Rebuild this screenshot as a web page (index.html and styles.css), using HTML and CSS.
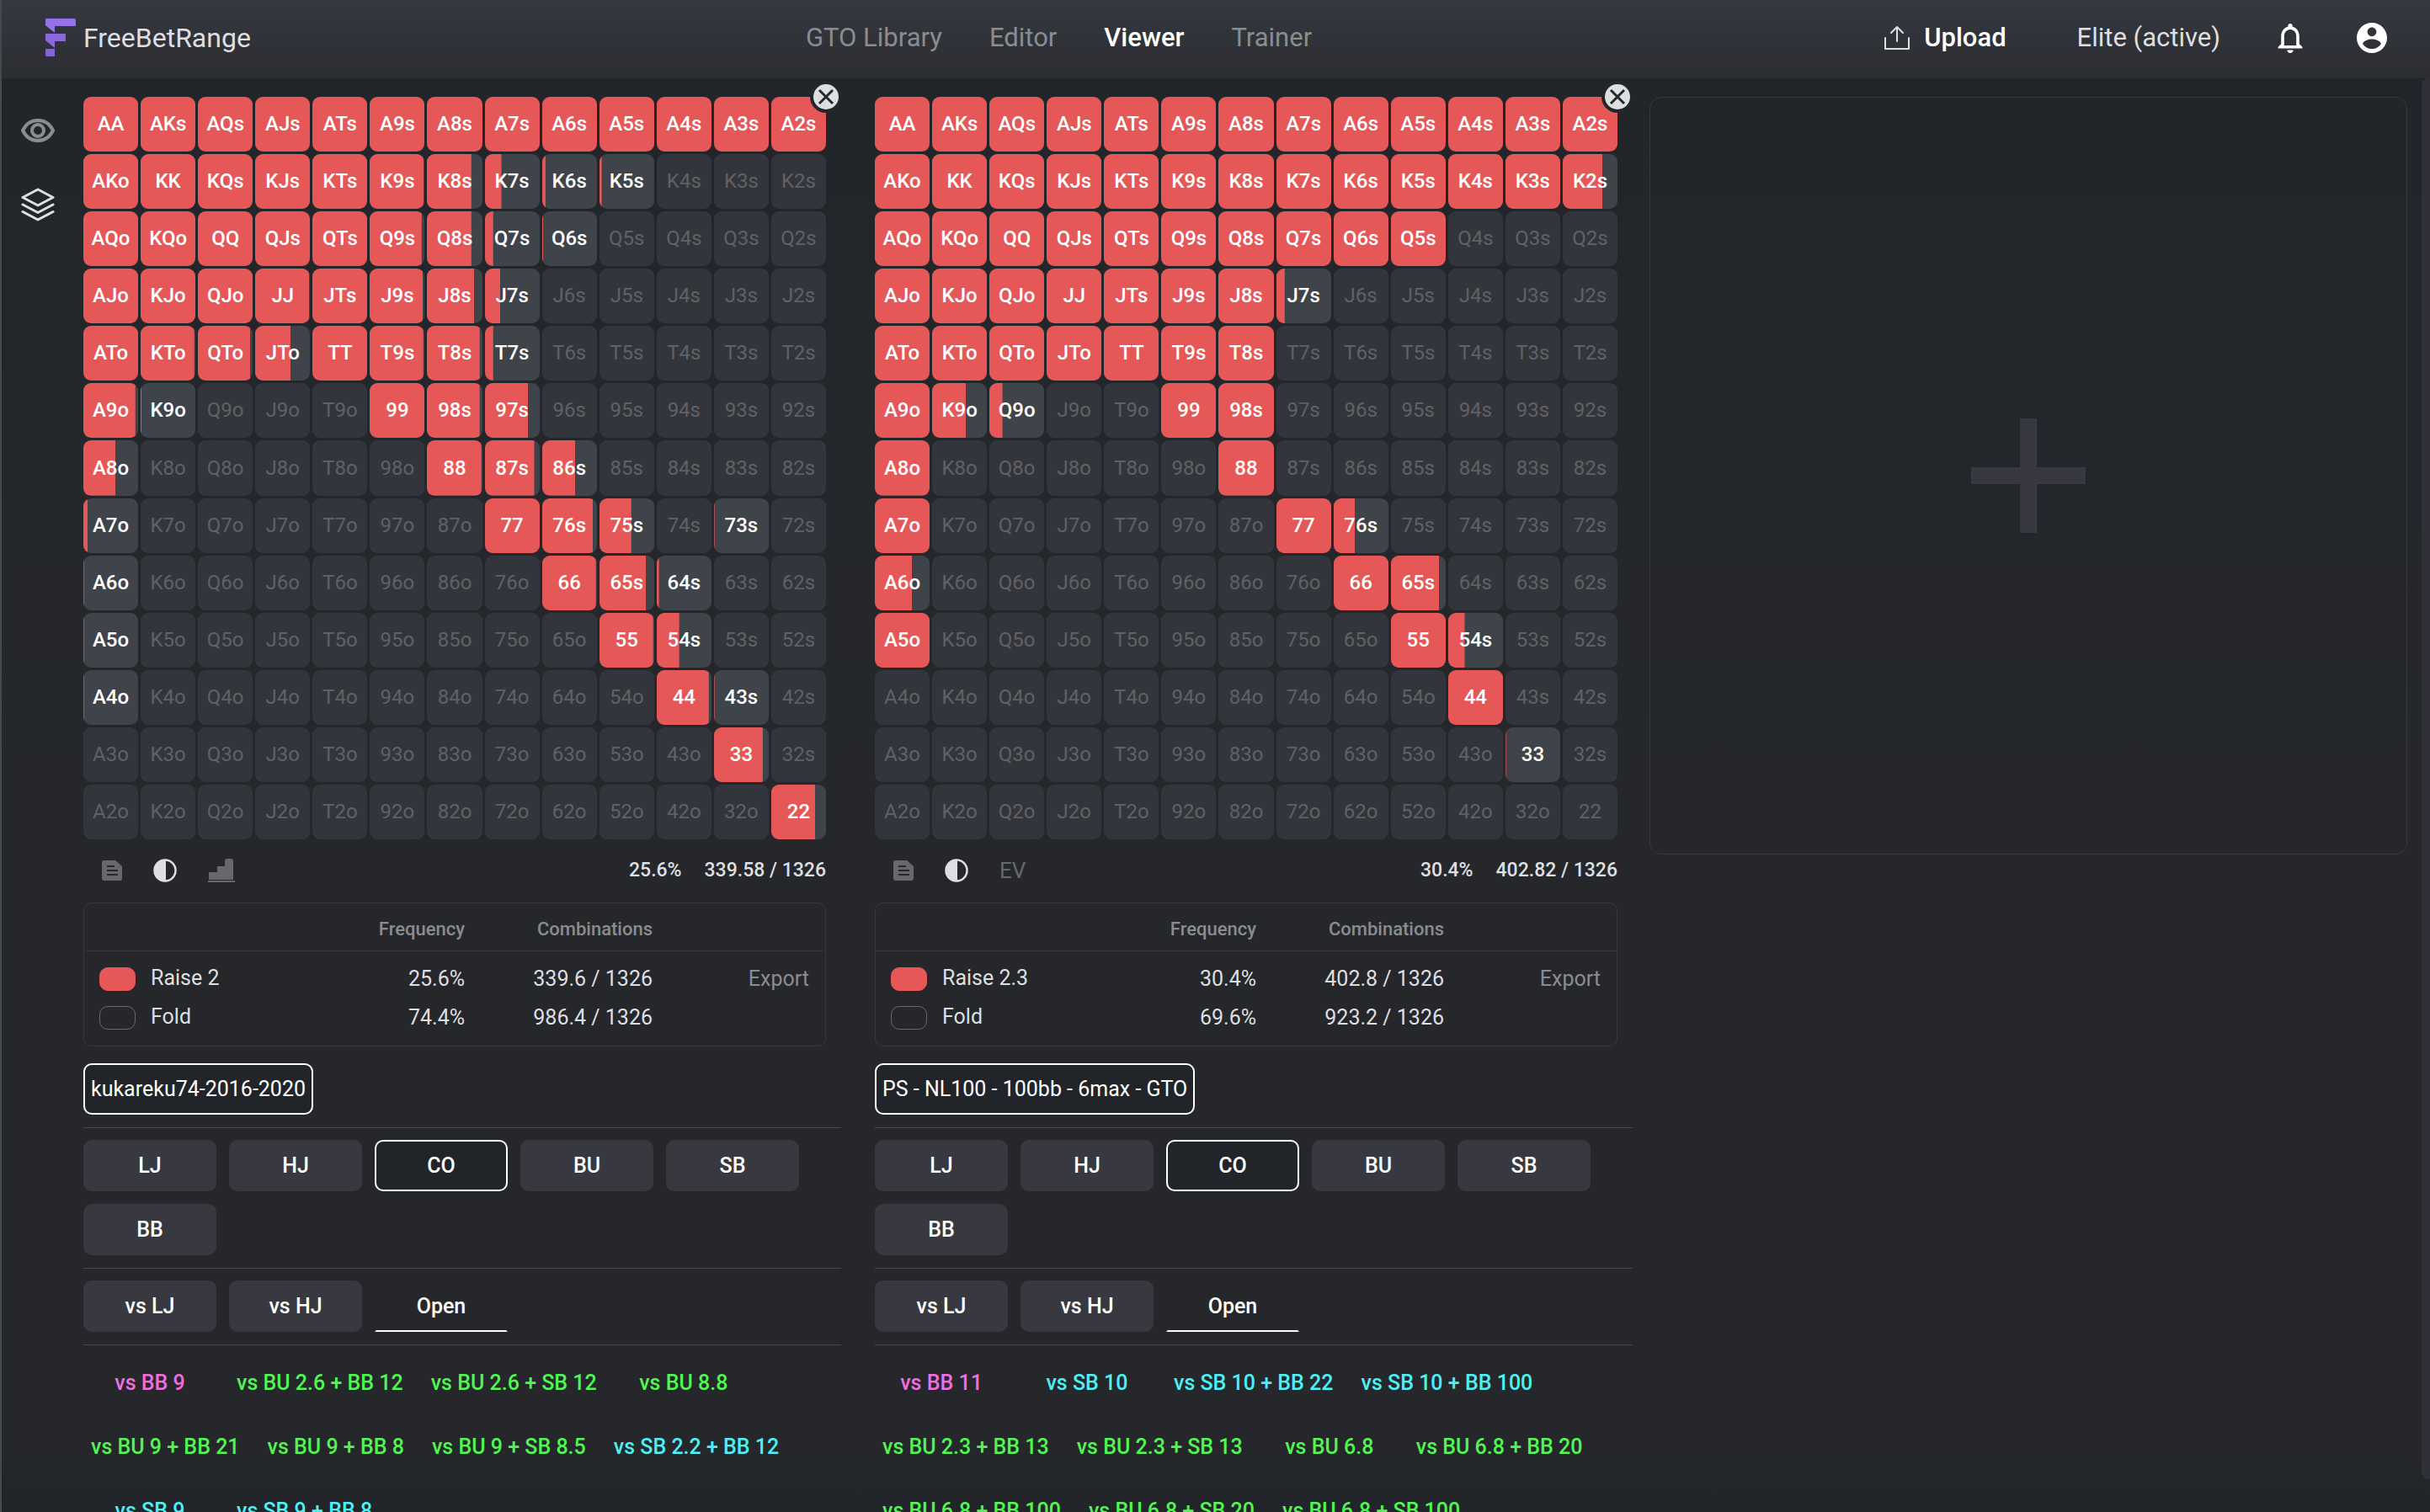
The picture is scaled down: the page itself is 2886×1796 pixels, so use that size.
FILE: index.html
```html
<!DOCTYPE html>
<html lang="en">
<head>
<meta charset="utf-8">
<title>FreeBetRange - Viewer</title>
<link rel="stylesheet" href="styles.css">
</head>
<body>
<header class="topbar">
  <a class="brand" href="#">
    <svg class="brand-mark" viewBox="0 0 36 45" width="36" height="45" aria-hidden="true">
      <path fill="#9572e8" d="M1 0h33a2 2 0 0 1 2 2v6a1 1 0 0 1-1 1H11v8L0 8V1a1 1 0 0 1 1-1z"/>
      <path fill="#8b68dc" d="M0 18h24v9H11v8L0 26z"/>
      <path fill="#8463d2" d="M0 36h11v9H1a1 1 0 0 1-1-1z"/>
    </svg>
    <span>FreeBetRange</span>
  </a>
  <nav class="nav">
    <a href="#">GTO Library</a>
    <a href="#">Editor</a>
    <a class="current" href="#" aria-current="page">Viewer</a>
    <a href="#">Trainer</a>
  </nav>
  <div class="account">
    <button class="upload" type="button">
      <svg viewBox="0 0 30 30" width="30" height="30" fill="none" stroke="currentColor" stroke-width="2" stroke-linejoin="round" stroke-linecap="round" aria-hidden="true"><path d="M15 19V2M8 9l7-7 7 7M1 15v13h28V15"/></svg>
      <span>Upload</span>
    </button>
    <a class="plan" href="#">Elite (active)</a>
    <button class="icon-button" type="button" aria-label="Notifications">
      <svg viewBox="4 2 16 20" width="30" height="36" fill="currentColor" aria-hidden="true"><path d="M12 22c1.100 0 2-.9 2-2h-4c0 1.100.9 2 2 2zm6-6v-5c0-3.070-1.630-5.640-4.500-6.320V4c0-.83-.67-1.500-1.500-1.500s-1.500.67-1.500 1.500v.68C7.640 5.360 6 7.920 6 11v5l-2 2v1h16v-1l-2-2zm-2 1H8v-6c0-2.480 1.510-4.500 4-4.500s4 2.020 4 4.500v6z"/></svg>
    </button>
    <button class="icon-button" type="button" aria-label="Account">
      <svg viewBox="2 2 20 20" width="36" height="36" fill="currentColor" aria-hidden="true"><path d="M12 2C6.480 2 2 6.480 2 12s4.480 10 10 10 10-4.480 10-10S17.520 2 12 2zm0 3c1.660 0 3 1.340 3 3s-1.340 3-3 3-3-1.340-3-3 1.340-3 3-3zm0 14.200c-2.500 0-4.710-1.280-6-3.220.03-1.990 4-3.080 6-3.080 1.990 0 5.970 1.090 6 3.080-1.290 1.940-3.500 3.220-6 3.220z"/></svg>
    </button>
  </div>
</header>

<div class="workspace">
  <aside class="rail">
    <button class="icon-button muted" type="button" aria-label="Visibility">
      <svg viewBox="0 0 40 30" width="40" height="30" fill="none" stroke="currentColor" stroke-width="4" stroke-linejoin="round" aria-hidden="true"><path d="M2 15C6 7 12 3 20 3s14 4 18 12c-4 8-10 12-18 12S6 23 2 15z"/><circle cx="20" cy="15" r="7"/></svg>
    </button>
    <button class="icon-button" type="button" aria-label="Layers">
      <svg viewBox="0 0 40 40" width="40" height="40" fill="none" stroke="currentColor" stroke-width="3" stroke-linejoin="round" stroke-linecap="round" aria-hidden="true"><path d="M20 2l18 9.500L20 21 2 11.500zM2 20l18 9.500L38 20M2 28.500L20 38l18-9.500"/></svg>
    </button>
  </aside>

  <main class="panels">
    <section class="panel" aria-label="kukareku74-2016-2020">
      <div class="range">
        <div class="matrix" data-range="left"></div>
        <button class="close" type="button" aria-label="Close range"><svg viewBox="0 0 30 30" width="30" height="30" fill="none" stroke="#24272b" stroke-width="3" aria-hidden="true"><path d="M7 7l16 16M23 7L7 23"/></svg></button>
        <div class="toolbar">
          <button class="tool" type="button" aria-label="Notes"><svg viewBox="0 0 24 24" width="24" height="24" aria-hidden="true"><path fill="currentColor" d="M3 0h13l8 7v14a3 3 0 0 1-3 3H3a3 3 0 0 1-3-3V3a3 3 0 0 1 3-3z"/><path stroke="#25272b" stroke-width="2" d="M6 7h9M6 12h13M6 17h13"/></svg></button>
          <button class="tool on" type="button" aria-label="Contrast"><svg viewBox="0 0 28 28" width="28" height="28" aria-hidden="true"><circle cx="14" cy="14" r="12.500" fill="none" stroke="currentColor" stroke-width="2.500"/><path fill="currentColor" d="M15 1v26A13 13 0 0 1 15 1z"/></svg></button>
          <button class="tool" type="button" aria-label="Chart"><svg viewBox="0 0 32 28" width="32" height="28" fill="currentColor" aria-hidden="true"><path d="M1 25V16h10V9h9V2l2-2h6l2 2v23zM0 26h32v2H0z"/></svg></button>
          <span class="total">25.6%</span>
          <span>339.58 / 1326</span>
        </div>
        <div class="summary">
          <table>
            <colgroup><col class="col-action"><col class="col-freq"><col class="col-combos"><col></colgroup>
            <thead><tr><th></th><th scope="col">Frequency</th><th scope="col">Combinations</th><th></th></tr></thead>
            <tbody>
              <tr><td class="action"><i class="swatch raise"></i>Raise 2</td><td>25.6%</td><td>339.6 / 1326</td><td class="last"><button class="export" type="button">Export</button></td></tr>
              <tr><td class="action"><i class="swatch"></i>Fold</td><td>74.4%</td><td>986.4 / 1326</td><td></td></tr>
            </tbody>
          </table>
        </div>
      </div>
      <div class="choices"><button class="choice library selected" type="button">kukareku74-2016-2020</button></div>
      <hr>
      <div class="choices">
        <button class="choice" type="button">LJ</button>
        <button class="choice" type="button">HJ</button>
        <button class="choice selected" type="button">CO</button>
        <button class="choice" type="button">BU</button>
        <button class="choice" type="button">SB</button>
        <button class="choice" type="button">BB</button>
      </div>
      <hr>
      <div class="choices">
        <button class="choice" type="button">vs LJ</button>
        <button class="choice" type="button">vs HJ</button>
        <button class="choice underlined" type="button">Open</button>
      </div>
      <hr>
      <div class="choices">
        <button class="choice vs-bb" type="button">vs BB 9</button>
        <button class="choice vs-bu" type="button">vs BU 2.6 + BB 12</button>
        <button class="choice vs-bu" type="button">vs BU 2.6 + SB 12</button>
        <button class="choice vs-bu" type="button">vs BU 8.8</button>
        <button class="choice vs-bu" type="button">vs BU 9 + BB 21</button>
        <button class="choice vs-bu" type="button">vs BU 9 + BB 8</button>
        <button class="choice vs-bu" type="button">vs BU 9 + SB 8.5</button>
        <button class="choice vs-sb" type="button">vs SB 2.2 + BB 12</button>
        <button class="choice vs-sb" type="button">vs SB 9</button>
        <button class="choice vs-sb" type="button">vs SB 9 + BB 8</button>
      </div>
    </section>

    <section class="panel" aria-label="PS - NL100 - 100bb - 6max - GTO">
      <div class="range">
        <div class="matrix" data-range="right"></div>
        <button class="close" type="button" aria-label="Close range"><svg viewBox="0 0 30 30" width="30" height="30" fill="none" stroke="#24272b" stroke-width="3" aria-hidden="true"><path d="M7 7l16 16M23 7L7 23"/></svg></button>
        <div class="toolbar">
          <button class="tool" type="button" aria-label="Notes"><svg viewBox="0 0 24 24" width="24" height="24" aria-hidden="true"><path fill="currentColor" d="M3 0h13l8 7v14a3 3 0 0 1-3 3H3a3 3 0 0 1-3-3V3a3 3 0 0 1 3-3z"/><path stroke="#25272b" stroke-width="2" d="M6 7h9M6 12h13M6 17h13"/></svg></button>
          <button class="tool on" type="button" aria-label="Contrast"><svg viewBox="0 0 28 28" width="28" height="28" aria-hidden="true"><circle cx="14" cy="14" r="12.500" fill="none" stroke="currentColor" stroke-width="2.500"/><path fill="currentColor" d="M15 1v26A13 13 0 0 1 15 1z"/></svg></button>
          <button class="tool ev" type="button">EV</button>
          <span class="total">30.4%</span>
          <span>402.82 / 1326</span>
        </div>
        <div class="summary">
          <table>
            <colgroup><col class="col-action"><col class="col-freq"><col class="col-combos"><col></colgroup>
            <thead><tr><th></th><th scope="col">Frequency</th><th scope="col">Combinations</th><th></th></tr></thead>
            <tbody>
              <tr><td class="action"><i class="swatch raise"></i>Raise 2.3</td><td>30.4%</td><td>402.8 / 1326</td><td class="last"><button class="export" type="button">Export</button></td></tr>
              <tr><td class="action"><i class="swatch"></i>Fold</td><td>69.6%</td><td>923.2 / 1326</td><td></td></tr>
            </tbody>
          </table>
        </div>
      </div>
      <div class="choices"><button class="choice library selected" type="button">PS - NL100 - 100bb - 6max - GTO</button></div>
      <hr>
      <div class="choices">
        <button class="choice" type="button">LJ</button>
        <button class="choice" type="button">HJ</button>
        <button class="choice selected" type="button">CO</button>
        <button class="choice" type="button">BU</button>
        <button class="choice" type="button">SB</button>
        <button class="choice" type="button">BB</button>
      </div>
      <hr>
      <div class="choices">
        <button class="choice" type="button">vs LJ</button>
        <button class="choice" type="button">vs HJ</button>
        <button class="choice underlined" type="button">Open</button>
      </div>
      <hr>
      <div class="choices">
        <button class="choice vs-bb" type="button">vs BB 11</button>
        <button class="choice vs-sb" type="button">vs SB 10</button>
        <button class="choice vs-sb" type="button">vs SB 10 + BB 22</button>
        <button class="choice vs-sb" type="button">vs SB 10 + BB 100</button>
        <button class="choice vs-bu" type="button">vs BU 2.3 + BB 13</button>
        <button class="choice vs-bu" type="button">vs BU 2.3 + SB 13</button>
        <button class="choice vs-bu" type="button">vs BU 6.8</button>
        <button class="choice vs-bu" type="button">vs BU 6.8 + BB 20</button>
        <button class="choice vs-bu" type="button">vs BU 6.8 + BB 100</button>
        <button class="choice vs-bu" type="button">vs BU 6.8 + SB 20</button>
        <button class="choice vs-bu" type="button">vs BU 6.8 + SB 100</button>
      </div>
    </section>

    <section class="panel">
      <button class="add" type="button" aria-label="Add range">
        <svg viewBox="0 0 136 136" width="136" height="136" fill="#373840" aria-hidden="true"><path d="M58 0h20v58h58v20H78v58H58V78H0V58h58z"/></svg>
      </button>
    </section>
  </main>
  <div class="scroll-thumb"></div>
</div>
<script src="script.js"></script>
</body>
</html>
```

FILE: styles.css
```css
* {
  box-sizing: border-box;
}

body {
  display: flex;
  flex-direction: column;
  height: 100vh;
  margin: 0;
  overflow: hidden;
  border-left: 2px solid #46494e;
  background: linear-gradient(#212529, #25272b 50%, #25272b 96%, #212428);
  color: #dedfe0;
  font-family: Roboto, "Liberation Sans", sans-serif;
  font-size: 25px;
}

a {
  color: inherit;
  text-decoration: none;
}

button {
  margin: 0;
  padding: 0;
  border: 0;
  background: none;
  color: inherit;
  font: inherit;
}

svg {
  display: block;
}

.topbar {
  display: flex;
  flex: none;
  align-items: center;
  justify-content: space-between;
  height: 93px;
  padding: 0 51px 4px 52px;
  background: linear-gradient(#363842, #2b2d31);
  font-size: 31px;
}

.brand {
  display: flex;
  align-items: center;
  gap: 9px;
  font-size: 32px;
}

.nav {
  display: flex;
  gap: 56px;
  margin-right: 21px;
  color: #8a8c90;
}

.nav .current {
  color: #fff;
  font-weight: 500;
}

.account {
  display: flex;
  align-items: center;
}

.upload {
  display: flex;
  align-items: center;
  gap: 17px;
  margin-right: 84px;
  color: #fff;
  font-weight: 500;
}

.upload svg {
  color: #dedfe0;
}

.plan {
  margin-right: 68px;
}

.account .icon-button {
  color: #fff;
}

.account .icon-button + .icon-button {
  margin-left: 64px;
}

.workspace {
  display: flex;
  flex: 1;
  min-height: 0;
}

.rail {
  display: flex;
  flex: none;
  flex-direction: column;
  align-items: center;
  gap: 53px;
  width: 85px;
  padding-top: 47px;
}

.muted {
  color: #8a8c90;
}

.panels {
  display: flex;
  flex: 1;
  gap: 20px;
  padding: 22px 17px 0 12px;
}

.panel {
  flex: 1 1 0;
  min-width: 0;
}

.panel:first-child {
  margin-right: 20px;
}

.range {
  position: relative;
  margin: 0 18px 20px 0;
}

.matrix {
  display: grid;
  grid-template-columns: repeat(13, 1fr);
  gap: 3px;
}

.hand {
  display: flex;
  align-items: center;
  justify-content: center;
  aspect-ratio: 1;
  padding-bottom: 1px;
  border-radius: 9px;
  background: #33353d;
  color: #606164;
  font-size: 24px;
}

.hand.played {
  background: linear-gradient(#e65758, #e65758) no-repeat left / 0 100% #3f434a;
  color: #fff;
  font-weight: 500;
}

.close {
  position: absolute;
  top: -19px;
  right: -19px;
  border: 4px solid #23262a;
  border-radius: 50%;
  background: #dedfe0;
}

.toolbar {
  display: flex;
  align-items: center;
  height: 75px;
  padding: 0 0 2px 22px;
  font-size: 23px;
  font-weight: 500;
}

.tool {
  margin-right: 37px;
  color: #67686a;
}

.tool.on {
  color: #dedfe0;
}

.tool.ev {
  font-size: 26px;
  font-weight: 400;
}

.total {
  margin: 0 27px 0 auto;
}

.summary {
  border: 1px solid #36383c;
  border-radius: 10px;
}

.summary table {
  width: 100%;
  table-layout: fixed;
  border-spacing: 0;
  margin-bottom: 11px;
}

.col-action {
  width: 252px;
}

.col-freq {
  width: 200px;
}

.col-combos {
  width: 223px;
}

.summary th {
  height: 57px;
  padding: 4px 0 0;
  border-bottom: 1px solid #36383c;
  color: #8a8c90;
  font-size: 22px;
  font-weight: 500;
  text-align: right;
}

.summary td {
  height: 46px;
  padding: 0;
  text-align: right;
}

.summary tr:first-child td {
  height: 55px;
  padding-top: 9px;
}

.summary .action {
  padding-left: 18px;
  text-align: left;
}

.swatch {
  display: inline-block;
  width: 43px;
  height: 28px;
  margin-right: 18px;
  border: 1px solid #67686a;
  border-radius: 10px;
  vertical-align: middle;
}

.swatch.raise {
  border-color: #e65758;
  background: #e65758;
}

.summary .last {
  padding-right: 19px;
}

.export {
  color: #8a8c90;
}

hr {
  margin: 15px 0 14px;
  border: 0;
  border-top: 1px solid #46484c;
}

.choices {
  display: flex;
  flex-wrap: wrap;
  gap: 15px;
}

.choice {
  min-width: 158px;
  height: 61px;
  padding: 0 7px;
  border: 2px solid transparent;
  border-radius: 10px;
  background: #373840;
  color: #fff;
  font-weight: 500;
}

.choice.library {
  font-weight: 400;
}

.choice.selected {
  border-color: #fff;
  background: #212529;
}

.choice.underlined {
  border-radius: 0;
  border-bottom-color: #fff;
  background: none;
}

.choice.vs-bb,
.choice.vs-bu,
.choice.vs-sb {
  background: none;
}

.choice.vs-bb {
  color: #f06ee0;
}

.choice.vs-bu {
  color: #52f552;
}

.choice.vs-sb {
  color: #4df0f5;
}

.add {
  display: flex;
  align-items: center;
  justify-content: center;
  width: 100%;
  aspect-ratio: 1;
  border: 1px solid #36383c;
  border-radius: 14px;
}

.scroll-thumb {
  flex: none;
  width: 10px;
  margin-bottom: 39px;
  border-radius: 8px 0 0 8px;
  background: #2f3038;
}
```

FILE: script.js
```js
// Raise frequency in percent for each hand, row by row; missing values are 0.
const ranges = {
  left: [
    [100, 100, 100, 100, 100, 100, 100, 100, 100, 100, 100, 100, 100],
    [100, 100, 100, 100, 100, 99, 80, 30, 6, 4],
    [100, 100, 100, 100, 100, 95, 80, 15, 2],
    [100, 100, 100, 99, 100, 97, 85, 28],
    [100, 98, 96, 65, 100, 98, 95, 15],
    [95, 2, 0, 0, 0, 100, 95, 79],
    [59, 0, 0, 0, 0, 0, 98, 90, 60],
    [8, 0, 0, 0, 0, 0, 0, 100, 93, 58, 0, 1],
    [1, 0, 0, 0, 0, 0, 0, 0, 98, 85, 4],
    [1, 0, 0, 0, 0, 0, 0, 0, 0, 98, 41],
    [1, 0, 0, 0, 0, 0, 0, 0, 0, 0, 95, 1],
    [0, 0, 0, 0, 0, 0, 0, 0, 0, 0, 0, 89],
    [0, 0, 0, 0, 0, 0, 0, 0, 0, 0, 0, 0, 80]
  ],
  right: [
    [100, 100, 100, 100, 100, 100, 100, 100, 100, 100, 100, 100, 100],
    [100, 100, 100, 100, 100, 100, 100, 100, 100, 100, 100, 100, 73],
    [100, 100, 100, 100, 100, 100, 100, 100, 100, 100],
    [100, 100, 100, 100, 100, 100, 100, 15],
    [100, 100, 100, 100, 100, 100, 100],
    [100, 62, 24, 0, 0, 100, 100],
    [100, 0, 0, 0, 0, 0, 100],
    [100, 0, 0, 0, 0, 0, 0, 100, 39],
    [68, 0, 0, 0, 0, 0, 0, 0, 100, 88],
    [100, 0, 0, 0, 0, 0, 0, 0, 0, 100, 30],
    [0, 0, 0, 0, 0, 0, 0, 0, 0, 0, 100],
    [0, 0, 0, 0, 0, 0, 0, 0, 0, 0, 0, 1],
    []
  ]
};

const cards = "AKQJT98765432";

function handName(row, col) {
  if (row === col) return cards[row] + cards[row];
  return row < col ? cards[row] + cards[col] + "s" : cards[col] + cards[row] + "o";
}

document.querySelectorAll(".matrix").forEach((matrix) => {
  const range = ranges[matrix.dataset.range];
  for (let row = 0; row < 13; row++) {
    for (let col = 0; col < 13; col++) {
      const share = range[row][col] || 0;
      const hand = document.createElement("div");
      hand.className = share ? "hand played" : "hand";
      if (share) hand.style.backgroundSize = share + "% 100%";
      hand.textContent = handName(row, col);
      matrix.append(hand);
    }
  }
});
```
